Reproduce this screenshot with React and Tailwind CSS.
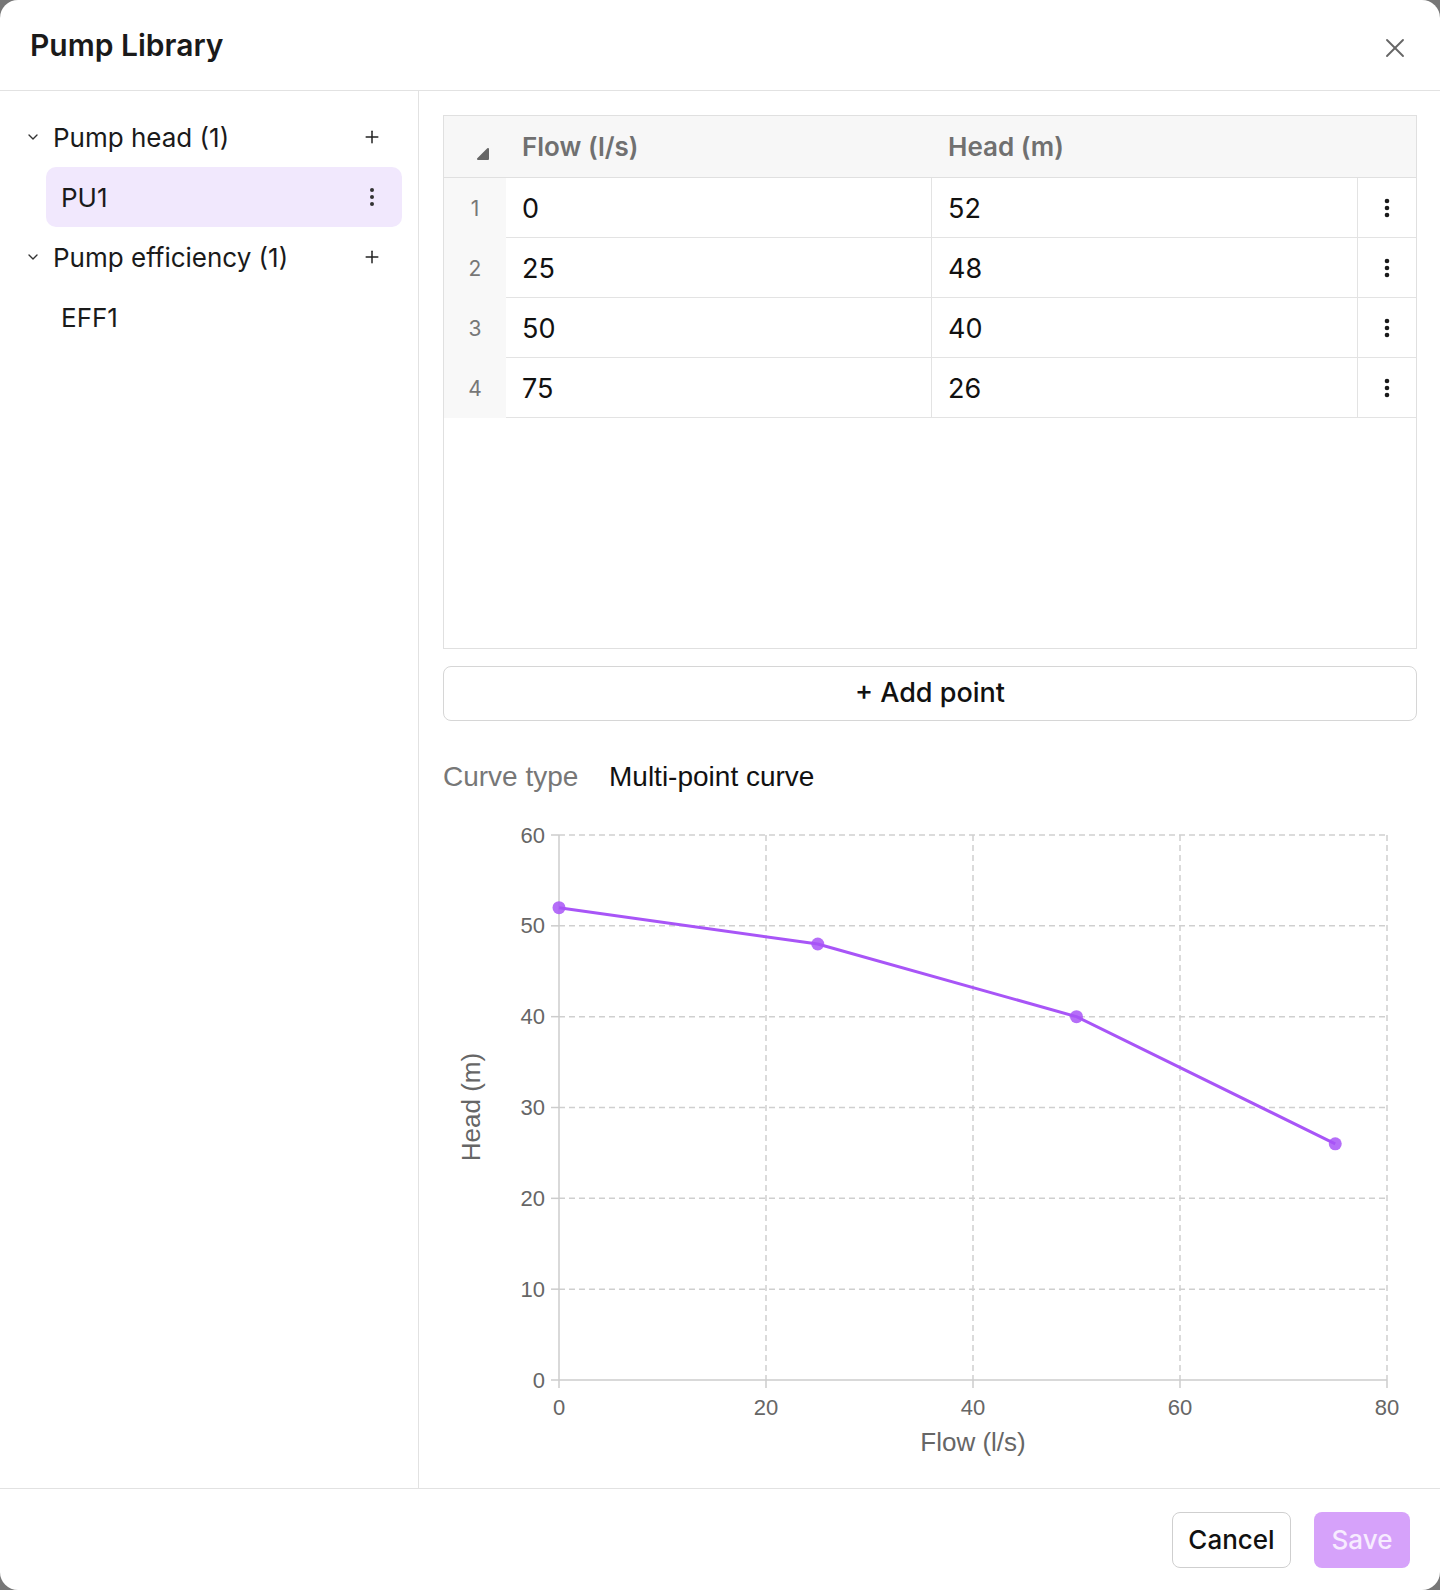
import React from "react";
import { X, Plus, ChevronDown } from "lucide-react";

const INTER = { fontFamily: "Inter, 'Noto Sans', sans-serif" };
const ARIAL = { fontFamily: "'Liberation Sans', Arial, sans-serif" };

function Dots({ color = "#222", r = 2.2 }) {
  return (
    <svg width="10" height="22" viewBox="0 0 10 22">
      <circle cx="5" cy="4" r={r} fill={color} />
      <circle cx="5" cy="11" r={r} fill={color} />
      <circle cx="5" cy="18" r={r} fill={color} />
    </svg>
  );
}

function SortIcon() {
  return (
    <svg width="14" height="14" viewBox="0 0 14 14">
      <path d="M12 2 L12 12 L2 12 Z" fill="#666" stroke="#666" strokeWidth="2" strokeLinejoin="round" />
    </svg>
  );
}

const rows = [
  [0, 52],
  [25, 48],
  [50, 40],
  [75, 26],
];

function Chart() {
  const x0 = 116,
    x1 = 944,
    yTop = 35,
    yBot = 580;
  const sx = (v) => x0 + ((x1 - x0) * v) / 80;
  const sy = (v) => yBot - ((yBot - yTop) * v) / 60;
  const yTicks = [0, 10, 20, 30, 40, 50, 60];
  const xTicks = [0, 20, 40, 60, 80];
  const pts = rows.map(([f, h]) => [sx(f), sy(h)]);
  return (
    <svg width="974" height="670" viewBox="0 0 974 670" style={ARIAL}>
      {yTicks.map((t) =>
        t === 0 ? null : (
          <line key={"gy" + t} x1={x0} x2={x1} y1={sy(t)} y2={sy(t)} stroke="#cfcfcf" strokeWidth="1.5" strokeDasharray="6 4" />
        )
      )}
      {xTicks.map((t) =>
        t === 0 ? null : (
          <line key={"gx" + t} x1={sx(t)} x2={sx(t)} y1={yTop} y2={yBot} stroke="#cfcfcf" strokeWidth="1.5" strokeDasharray="6 4" />
        )
      )}
      <line x1={x0} x2={x0} y1={yTop} y2={yBot} stroke="#cccccc" strokeWidth="1.5" />
      <line x1={x0} x2={x1} y1={yBot} y2={yBot} stroke="#cccccc" strokeWidth="1.5" />
      {yTicks.map((t) => (
        <g key={"ty" + t}>
          <line x1={x0 - 8} x2={x0} y1={sy(t)} y2={sy(t)} stroke="#cccccc" strokeWidth="1.5" />
          <text x={x0 - 14} y={sy(t)} textAnchor="end" dominantBaseline="central" fontSize="22" fill="#666">
            {t}
          </text>
        </g>
      ))}
      {xTicks.map((t) => (
        <g key={"tx" + t}>
          <line x1={sx(t)} x2={sx(t)} y1={yBot} y2={yBot + 8} stroke="#cccccc" strokeWidth="1.5" />
          <text x={sx(t)} y={yBot + 27} textAnchor="middle" dominantBaseline="central" fontSize="22" fill="#666">
            {t}
          </text>
        </g>
      ))}
      <text x="530" y="642" textAnchor="middle" dominantBaseline="central" fontSize="26" fill="#666">
        Flow (l/s)
      </text>
      <text x="28" y="307" textAnchor="middle" dominantBaseline="central" fontSize="26" fill="#666" transform="rotate(-90 28 307)">
        Head (m)
      </text>
      <polyline points={pts.map((p) => p.join(",")).join(" ")} fill="none" stroke="#a855f7" strokeWidth="3" strokeLinejoin="round" />
      {pts.map((p, i) => (
        <circle key={i} cx={p[0]} cy={p[1]} r="6.5" fill="#a855f7" fillOpacity="0.85" />
      ))}
    </svg>
  );
}

export default function App() {
  return (
    <div className="w-[1440px] h-[1590px] bg-[#777777]" style={INTER}>
      <div className="w-full h-full bg-white rounded-[18px] flex flex-col overflow-hidden">
        {/* Header */}
        <div className="h-[91px] shrink-0 border-b border-[#e2e2e2] flex items-center justify-between pl-[30px] pr-[29px]">
          <div className="text-[30px] font-semibold text-[#1a1a1a]">Pump Library</div>
          <X size={32} strokeWidth={1.4} color="#666" className="mt-[6px]" />
        </div>

        {/* Body */}
        <div className="flex flex-1 min-h-0">
          {/* Sidebar */}
          <div className="w-[419px] shrink-0 border-r border-[#e2e2e2] pt-[16px] pl-[24px] pr-[16px]">
            <div className="h-[60px] flex items-center pr-[20px]">
              <ChevronDown size={16} strokeWidth={2} color="#333" className="ml-[1px]" />
              <span className="ml-[12px] text-[26px] text-[#1a1a1a] flex-1">Pump head (1)</span>
              <Plus size={20} strokeWidth={1.8} color="#222" />
            </div>
            <div className="h-[60px] ml-[22px] rounded-[10px] bg-[#f1e8fd] flex items-center pl-[15px] pr-[25px]">
              <span className="text-[26px] text-[#1a1a1a] flex-1">PU1</span>
              <Dots color="#333" r={2} />
            </div>
            <div className="h-[60px] flex items-center pr-[20px]">
              <ChevronDown size={16} strokeWidth={2} color="#333" className="ml-[1px]" />
              <span className="ml-[12px] text-[26px] text-[#1a1a1a] flex-1">Pump efficiency (1)</span>
              <Plus size={20} strokeWidth={1.8} color="#222" />
            </div>
            <div className="h-[60px] ml-[22px] flex items-center pl-[15px]">
              <span className="text-[26px] text-[#1a1a1a]">EFF1</span>
            </div>
          </div>

          {/* Main */}
          <div className="flex-1 pl-[24px] pr-[23px] pt-[24px] flex flex-col">
            <div className="h-[534px] border border-[#e0e0e0] flex flex-col">
              <div className="h-[62px] shrink-0 bg-[#f7f7f7] border-b border-[#e0e0e0] flex items-center">
                <div className="w-[62px] h-full flex items-center justify-center pl-[16px] pt-[14px]">
                  <SortIcon />
                </div>
                <div className="w-[426px] pl-[16px] text-[26px] font-semibold text-[#707070]">Flow (l/s)</div>
                <div className="flex-1 pl-[16px] text-[26px] font-semibold text-[#707070]">Head (m)</div>
              </div>
              {rows.map(([f, h], i) => (
                <div key={i} className="h-[60px] shrink-0 flex">
                  <div className="w-[62px] bg-[#f8f8f8] flex items-center justify-center pt-[2px] text-[21px] text-[#777]">{i + 1}</div>
                  <div className="w-[426px] border-b border-r border-[#e3e3e3] flex items-center pl-[16px] pt-[3px] text-[27px] text-[#111]">
                    {f}
                  </div>
                  <div className="w-[426px] border-b border-r border-[#e3e3e3] flex items-center pl-[16px] pt-[3px] text-[27px] text-[#111]">
                    {h}
                  </div>
                  <div className="flex-1 border-b border-[#e3e3e3] flex items-center justify-center">
                    <Dots color="#1a1a1a" r={2.3} />
                  </div>
                </div>
              ))}
            </div>

            <div className="mt-[17px] h-[55px] shrink-0 border border-[#d6d6d6] rounded-[8px] flex items-center justify-center text-[27px] font-medium text-[#111]">
              + Add point
            </div>

            <div className="mt-[40px] h-[32px] flex items-center text-[28px]" style={ARIAL}>
              <span className="w-[166px] text-[#777]">Curve type</span>
              <span className="text-[#111]">Multi-point curve</span>
            </div>

            <div className="mt-[7px]">
              <Chart />
            </div>
          </div>
        </div>

        {/* Footer */}
        <div className="h-[102px] shrink-0 border-t border-[#e2e2e2] flex items-center justify-end pr-[30px] gap-[23px]">
          <div className="h-[56px] w-[119px] border border-[#cfcfcf] rounded-[8px] flex items-center justify-center text-[26px] font-medium text-[#111]">
            Cancel
          </div>
          <div className="h-[56px] w-[96px] bg-[#d6a2fa] rounded-[8px] flex items-center justify-center text-[26px] font-medium text-[#f7ecff]">
            Save
          </div>
        </div>
      </div>
    </div>
  );
}
